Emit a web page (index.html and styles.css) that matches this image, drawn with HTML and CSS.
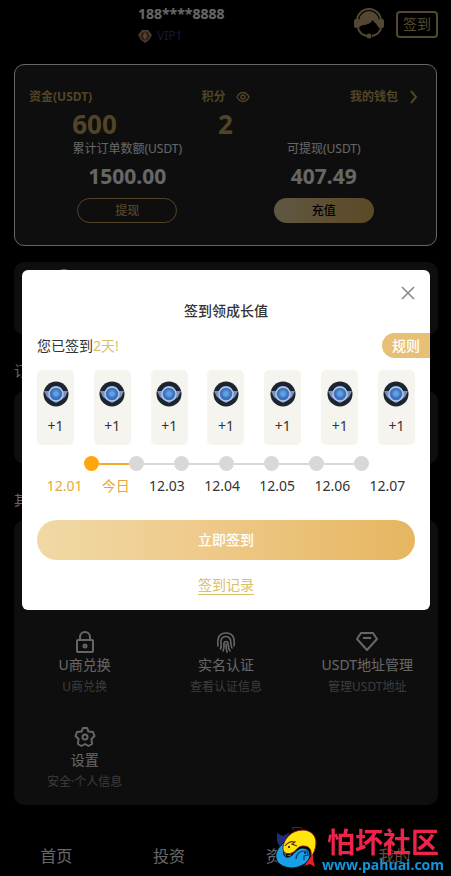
FILE: index.html
```html
<!DOCTYPE html>
<html lang="zh-CN">
<head>
    <meta charset="UTF-8">
    <meta name="viewport" content="width=device-width, initial-scale=1.0">
    <title>我的</title>
    <link rel="stylesheet" href="styles.css">
</head>
<body>
    <svg class="defs" width="0" height="0" aria-hidden="true">
        <defs>
            <radialGradient id="gem-fill" cx="50%" cy="45%" r="55%">
                <stop offset="0" stop-color="#78b4ee"/>
                <stop offset="1" stop-color="#2f66b4"/>
            </radialGradient>
            <symbol id="gem" viewBox="0 0 26 26">
                <circle cx="13" cy="13" r="12.5" fill="#1b2530"/>
                <path d="M1 10l5 0 3-4 4-1 4 1 3 4 5 0-3 6-4 3-5 3-5-3-4-3z" fill="#7f90bd"/>
                <circle cx="13" cy="13" r="7" fill="#4273bb" stroke="#b4caee" stroke-width="1.4"/>
                <circle cx="13" cy="13" r="5" fill="url(#gem-fill)"/>
                <path d="M10 13l3-3 3 3-3 3z" fill="#5da0e4"/>
            </symbol>
        </defs>
    </svg>

    <div class="page">
        <header class="header">
            <div class="user">
                <div class="phone">188****8888</div>
                <div class="vip">
                    <svg width="14" height="14" viewBox="0 0 14 14">
                        <path d="M4 1h6l4 5-3 5-4 3-4-3-3-5z" fill="#a79a94"/>
                        <circle cx="7" cy="7" r="4.5" fill="#84502f"/>
                        <path d="M7 3l2 4-2 4-2-4z" fill="#e0a783"/>
                    </svg>
                    <span>VIP1</span>
                </div>
            </div>
            <button class="service" aria-label="客服">
                <svg width="30" height="32" viewBox="0 0 30 32">
                    <path d="M3 13a12 12 0 0 1 24 0" fill="none" stroke="#cdb57a" stroke-width="2"/>
                    <path d="M5 13a10 10 0 0 1 20 0l-1 5H6z" fill="#cdb57a"/>
                    <rect x="0" y="11" width="6" height="9" rx="2" fill="#cdb57a"/>
                    <rect x="24" y="11" width="6" height="9" rx="2" fill="#cdb57a"/>
                    <path d="M8 17c5 0 9-2 11-5 1 3 3 3 4 5 0 5-4 8-8 8s-7-3-7-8z" fill="#000"/>
                    <path d="M4 20c1 4 4 7 9 8M27 20c-1 4-4 7-9 8" fill="none" stroke="#cdb57a" stroke-width="2"/>
                    <circle cx="15" cy="28" r="2.5" fill="#cdb57a"/>
                </svg>
            </button>
            <button class="sign-btn">签到</button>
        </header>

        <section class="wallet">
            <div class="wallet-top">
                <div class="stat">
                    <div class="stat-label">资金(USDT)</div>
                    <div class="stat-value">600</div>
                </div>
                <div class="stat stat-points">
                    <div class="stat-label">积分
                        <svg width="14" height="12" viewBox="0 0 14 12" fill="none" stroke="currentColor" stroke-width="1.4">
                            <path d="M1 6c3-6 9-6 12 0-3 6-9 6-12 0z"/>
                            <circle cx="7" cy="6" r="2"/>
                        </svg>
                    </div>
                    <div class="stat-value">2</div>
                </div>
                <a class="stat-label wallet-link" href="#">我的钱包
                    <svg width="8" height="14" viewBox="0 0 8 14" fill="none" stroke="currentColor" stroke-width="2">
                        <path d="M1 1l5 6-5 6"/>
                    </svg>
                </a>
            </div>
            <div class="wallet-bottom">
                <div class="amount">
                    <div class="amount-label">累计订单数额(USDT)</div>
                    <div class="amount-value">1500.00</div>
                    <button class="pill pill-outline">提现</button>
                </div>
                <div class="amount">
                    <div class="amount-label">可提现(USDT)</div>
                    <div class="amount-value">407.49</div>
                    <button class="pill pill-gold">充值</button>
                </div>
            </div>
        </section>

        <section class="panel panel-short">
            <svg width="22" height="22" viewBox="0 0 22 22" fill="none" stroke="#fff" stroke-width="2">
                <circle cx="11" cy="11" r="9"/>
            </svg>
        </section>

        <h2 class="section-title">订单</h2>
        <section class="panel panel-short"></section>

        <h2 class="section-title">其他</h2>
        <section class="panel menu">
            <a class="menu-item menu-wide" href="#" aria-label="更多"></a>
            <a class="menu-item" href="#">
                <svg width="22" height="22" viewBox="0 0 22 22" fill="none" stroke="currentColor" stroke-width="2">
                    <rect x="3" y="9" width="16" height="12" rx="1"/>
                    <path d="M6 9V6a5 5 0 0 1 10 0v3"/>
                    <circle cx="11" cy="15" r="1.5"/>
                </svg>
                <span class="menu-name">U商兑换</span>
                <span class="menu-desc">U商兑换</span>
            </a>
            <a class="menu-item" href="#">
                <svg width="22" height="22" viewBox="0 0 22 22" fill="none" stroke="currentColor" stroke-width="1.6" stroke-linecap="round">
                    <path d="M3 15c-1-8 1-13 8-13s9 5 8 13"/>
                    <path d="M5.500 18c2-5-1-6 1-10s8-3 9 1c.5 3 0 5 1.500 8"/>
                    <path d="M8 20c2-4 .5-6 1-8s3.500-2 4 0c.4 3 0 5.500 2 8"/>
                    <path d="M11 13c.3 3 0 5 1 8"/>
                </svg>
                <span class="menu-name">实名认证</span>
                <span class="menu-desc">查看认证信息</span>
            </a>
            <a class="menu-item" href="#">
                <svg width="22" height="22" viewBox="0 0 22 22" fill="none" stroke="currentColor" stroke-width="2" stroke-linejoin="round">
                    <path d="M5 2h12l4 6-10 11L1 8z"/>
                    <path d="M7 7h8"/>
                </svg>
                <span class="menu-name">USDT地址管理</span>
                <span class="menu-desc">管理USDT地址</span>
            </a>
            <a class="menu-item" href="#">
                <svg width="22" height="22" viewBox="0 0 22 22" fill="none" stroke="currentColor" stroke-width="2" stroke-linejoin="round">
                    <path d="M9 2h4l1.500 3.500 4.500.5 1.500 4-3 3 .5 5-3.500 2-3.500-2-3.500 2-3.500-2 .5-5-3-3 1.500-4 4.500-.5z"/>
                    <circle cx="11" cy="11" r="2.500"/>
                </svg>
                <span class="menu-name">设置</span>
                <span class="menu-desc">安全·个人信息</span>
            </a>
        </section>
    </div>

    <nav class="tabbar">
        <a href="#">首页</a>
        <a href="#">投资</a>
        <a href="#">资讯</a>
        <a class="active" href="#">我的</a>
    </nav>

    <div class="overlay">
        <div class="modal" role="dialog" aria-labelledby="modal-title">
            <button class="close" aria-label="关闭">
                <svg width="14" height="14" viewBox="0 0 14 14" stroke="currentColor" stroke-width="1.6">
                    <path d="M1 1l12 12M13 1L1 13"/>
                </svg>
            </button>
            <h1 class="modal-title" id="modal-title">签到领成长值</h1>
            <div class="signed">
                <p>您已签到<span class="days">2天!</span></p>
                <button class="rule">规则</button>
            </div>
            <ul class="rewards">
                <li><svg width="26" height="26"><use href="#gem"/></svg><span>+1</span></li>
                <li><svg width="26" height="26"><use href="#gem"/></svg><span>+1</span></li>
                <li><svg width="26" height="26"><use href="#gem"/></svg><span>+1</span></li>
                <li><svg width="26" height="26"><use href="#gem"/></svg><span>+1</span></li>
                <li><svg width="26" height="26"><use href="#gem"/></svg><span>+1</span></li>
                <li><svg width="26" height="26"><use href="#gem"/></svg><span>+1</span></li>
                <li><svg width="26" height="26"><use href="#gem"/></svg><span>+1</span></li>
            </ul>
            <div class="steps">
                <i class="dot done"></i><i class="line done"></i>
                <i class="dot"></i><i class="line"></i>
                <i class="dot"></i><i class="line"></i>
                <i class="dot"></i><i class="line"></i>
                <i class="dot"></i><i class="line"></i>
                <i class="dot"></i><i class="line"></i>
                <i class="dot"></i>
            </div>
            <div class="dates">
                <span class="done">12.01</span>
                <span class="done">今日</span>
                <span>12.03</span>
                <span>12.04</span>
                <span>12.05</span>
                <span>12.06</span>
                <span>12.07</span>
            </div>
            <button class="submit">立即签到</button>
            <a class="record" href="#">签到记录</a>
        </div>
    </div>

    <div class="brand">
        <svg width="48" height="46" viewBox="0 0 48 46">
            <path d="M3 6l6 3 7-4-5 8-4 9-4-8z" fill="#1d2f7c"/>
            <path d="M20 3l-2-3 10 1" fill="none" stroke="#8f1420" stroke-width="1"/>
            <path d="M12 14c-7 5-11 11-10 17 1 6 8 10 17 10 9-1 16-6 17-12 0-5-3-8-8-8-6 1-8 7-13 9-5 1-8-3-3-16z" fill="#18a0e6" stroke="#05141f"/>
            <path d="M10 25c-2-3-1-8 2-13C16 6 22 3 30 3c8 1 12 6 12 13 0 5-2 10-5 14 1-8-2-11-8-11-5 0-7 5-11 7-3 1-6 1-8-1z" fill="#ffe60a" stroke="#7c1914"/>
            <path d="M11 19c3-4 7-5 10-4l-3 2 5 2" fill="none" stroke="#5b2d0c" stroke-width="1.200"/>
            <path d="M22 32c0-4 3-8 8-8 3 0 4 2 4 4l-4 1v4" fill="none" stroke="#0b3763" stroke-width="1.200"/>
            <circle cx="15" cy="20" r="1" fill="#111"/>
            <circle cx="31" cy="26" r="1" fill="#111"/>
            <path d="M39 27l0 6 2 7-5-3-6 2 4-5z" fill="#ee1c2c"/>
        </svg>
        <div class="brand-text">
            <div class="brand-name">怕坏社区</div>
            <div class="brand-url">www.pahuai.com</div>
        </div>
    </div>
</body>
</html>
```
FILE: styles.css
```css
* {
    box-sizing: border-box;
}

body {
    margin: 0;
    background-color: #000;
    color: #fff;
    font-family: "Noto Sans", "Noto Sans CJK SC", sans-serif;
    font-size: 14px;
    line-height: 20px;
}

button {
    padding: 0;
    border: none;
    background: none;
    color: inherit;
    font: inherit;
    cursor: pointer;
}

a {
    color: inherit;
    text-decoration: none;
}

svg {
    display: block;
    flex: none;
}

.defs {
    position: absolute;
}

.page {
    padding: 0 13px 71px 14px;
}

/* header */
.header {
    display: flex;
    align-items: center;
    height: 48px;
    margin-bottom: 16px;
}

.user {
    flex: 1;
    padding-left: 124px;
}

.phone {
    font-weight: bold;
    line-height: 24px;
}

.vip {
    display: flex;
    align-items: center;
    gap: 5px;
    color: #3b3f8c;
    font-size: 12px;
}

.service {
    margin-right: 12px;
}

.sign-btn {
    width: 42px;
    height: 27px;
    border: 2px solid #cdb57a;
    border-radius: 4px;
    color: #cdb57a;
}

/* wallet */
.wallet {
    margin: 0 1px 16px 0;
    padding: 21px 14px 22px;
    border: 1px solid #fff;
    border-radius: 10px;
    background-color: #232323;
}

.wallet-top {
    display: grid;
    grid-template-columns: repeat(3, 1fr);
    align-items: start;
    color: #cbab62;
}

.stat-label {
    display: flex;
    align-items: center;
    gap: 10px;
    font-size: 12px;
    font-weight: bold;
    line-height: 22px;
}

.stat-points .stat-label {
    justify-content: center;
}

.wallet-link {
    justify-content: flex-end;
    gap: 12px;
    padding-right: 4px;
}

.stat-value {
    font-size: 26px;
    font-weight: bold;
    line-height: 33px;
    text-align: center;
}

.wallet-bottom {
    display: grid;
    grid-template-columns: repeat(2, 1fr);
}

.amount {
    display: flex;
    flex-direction: column;
    align-items: center;
}

.amount-label {
    font-size: 12px;
    line-height: 16px;
}

.amount-value {
    margin: 4px 0 7px;
    font-size: 21px;
    font-weight: bold;
    line-height: 30px;
}

.pill {
    width: 100px;
    height: 25px;
    border-radius: 13px;
    font-size: 12px;
    font-weight: 500;
}

.pill-outline {
    border: 1px solid #cbab62;
    color: #cbab62;
}

.pill-gold {
    background: linear-gradient(90deg, #f0d9a5, #e6b660);
    color: #000;
}

/* panels */
.panel {
    border-radius: 10px;
    background-color: #232323;
}

.panel-short {
    height: 73px;
    padding: 6px 39px;
}

.section-title {
    margin: 24px 0 8px;
    font-size: 14px;
    font-weight: normal;
    line-height: 24px;
}

.menu {
    display: grid;
    grid-template-columns: repeat(3, 1fr);
    grid-auto-rows: 95px;
}

.menu-item {
    display: flex;
    flex-direction: column;
    align-items: center;
    padding-top: 16px;
}

.menu-wide {
    grid-column: 1 / -1;
}

.menu-name {
    line-height: 24px;
}

.menu-desc {
    color: #999;
    font-size: 12px;
}

/* bottom tabs */
.tabbar {
    position: fixed;
    right: 0;
    bottom: 0;
    left: 0;
    display: flex;
    height: 40px;
    background-color: #000;
    font-size: 16px;
    line-height: 40px;
    text-align: center;
}

.tabbar a {
    flex: 1;
}

.tabbar .active {
    color: #e6c98a;
}

/* sign-in dialog */
.overlay {
    position: fixed;
    inset: 0;
    display: flex;
    align-items: center;
    justify-content: center;
    padding: 4px 21px 0 22px;
    background-color: rgba(0, 0, 0, 0.6);
}

.modal {
    position: relative;
    flex: 1;
    display: flex;
    flex-direction: column;
    padding: 30px 15px 15px;
    border-radius: 6px;
    background-color: #fff;
    color: #333;
}

.close {
    position: absolute;
    top: 16px;
    right: 15px;
    color: #888;
}

.modal-title {
    margin: 0 0 11px;
    font-size: 14px;
    font-weight: 500;
    line-height: 22px;
    text-align: center;
}

.signed {
    display: flex;
    align-items: center;
    justify-content: space-between;
    margin-right: -15px;
}

.signed p {
    margin: 0;
}

.days {
    color: #d9c069;
}

.rule {
    width: 48px;
    height: 25px;
    border-radius: 13px 0 0 13px;
    background-color: #e6c075;
    color: #fff;
    font-weight: 500;
}

.rewards {
    display: flex;
    justify-content: space-between;
    margin: 12px 0 11px;
    padding: 0;
    list-style: none;
}

.rewards li {
    display: flex;
    flex-direction: column;
    align-items: center;
    gap: 9px;
    width: 37px;
    height: 75px;
    padding-top: 11px;
    border-radius: 5px;
    background-color: #f6f4ef;
}

.steps {
    display: flex;
    align-items: center;
    align-self: center;
    width: 285px;
}

.dot {
    width: 15px;
    height: 15px;
    border-radius: 50%;
    background-color: #d8d8d8;
}

.line {
    flex: 1;
    height: 2px;
    background-color: #d8d8d8;
}

.dot.done {
    background-color: #ffa60d;
}

.line.done {
    background-color: #f0aa2c;
}

.dates {
    display: flex;
    justify-content: space-around;
    margin: 5px 0 24px;
}

.dates .done {
    color: #e8a838;
}

.submit {
    height: 40px;
    border-radius: 20px;
    background: linear-gradient(90deg, #f0d9a5, #efcb8d 40%, #e6b660);
    color: #fff;
    font-weight: 500;
}

.record {
    align-self: center;
    margin-top: 16px;
    border-bottom: 1px solid #d9c069;
    color: #d9c069;
    line-height: 18px;
}

/* site brand */
.brand {
    position: fixed;
    right: 7px;
    bottom: 3px;
    display: flex;
    align-items: center;
}

.brand-name {
    color: #f0244a;
    font-family: "Noto Sans CJK SC", sans-serif;
    font-size: 28px;
    font-weight: bold;
    line-height: 29px;
    text-align: center;
}

.brand-url {
    color: #1296db;
    font-family: "Open Sans", sans-serif;
    font-size: 14px;
    font-weight: bold;
    line-height: 17px;
}
```
